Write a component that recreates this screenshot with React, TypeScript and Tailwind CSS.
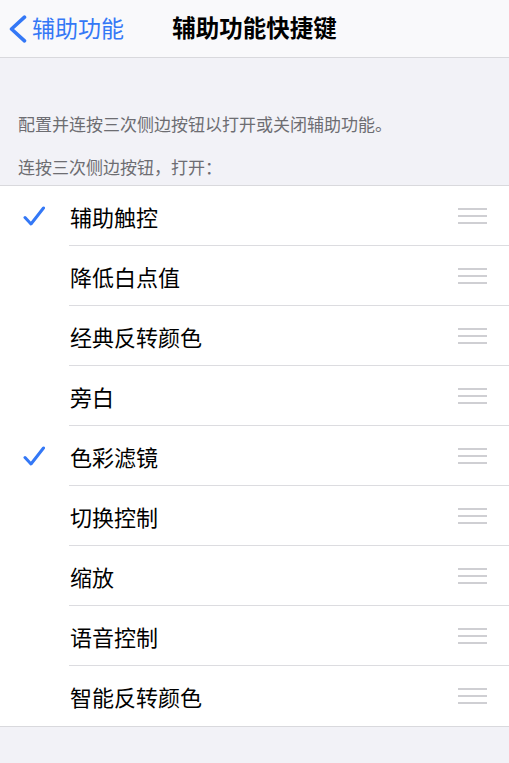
import React from "react";

const font = { fontFamily: '"Noto Sans CJK SC", "Noto Sans", sans-serif' };

interface ShortcutItem {
  label: string;
  checked: boolean;
}

const items: ShortcutItem[] = [
  { label: "辅助触控", checked: true },
  { label: "降低白点值", checked: false },
  { label: "经典反转颜色", checked: false },
  { label: "旁白", checked: false },
  { label: "色彩滤镜", checked: true },
  { label: "切换控制", checked: false },
  { label: "缩放", checked: false },
  { label: "语音控制", checked: false },
  { label: "智能反转颜色", checked: false },
];

function Check() {
  return (
    <svg width="22" height="20" viewBox="0 0 22 20" fill="none">
      <path
        d="M2 11.5 L8 18 L20.5 2"
        stroke="#3478f6"
        strokeWidth="3"
        strokeLinecap="round"
        strokeLinejoin="round"
      />
    </svg>
  );
}

function Grabber() {
  return (
    <div className="flex w-[29px] flex-col gap-[5px]">
      <div className="h-[2px] bg-[#cfcfd3]" />
      <div className="h-[2px] bg-[#cfcfd3]" />
      <div className="h-[2px] bg-[#cfcfd3]" />
    </div>
  );
}

export default function App() {
  return (
    <div className="min-h-[763px] w-[509px] bg-[#f2f2f7]" style={font}>
      {/* nav bar */}
      <div className="relative flex h-[58px] items-center border-b border-[#d9d9dd] bg-[#f9f9fb]">
        <div className="flex items-center pl-[8px] text-[23px] leading-none text-[#3478f6]">
          <svg width="20" height="28" viewBox="0 0 20 28" fill="none" className="mr-[4px]">
            <path
              d="M16.5 2.2 L3.5 14 L16.5 25.8"
              stroke="#3478f6"
              strokeWidth="3.6"
              strokeLinecap="round"
              strokeLinejoin="round"
            />
          </svg>
          <span className="-mt-[2px]">辅助功能</span>
        </div>
        <div className="pointer-events-none absolute inset-x-0 top-0 flex h-[58px] items-center justify-center">
          <span className="-mt-[2px] text-[23.5px] font-semibold leading-none text-black">辅助功能快捷键</span>
        </div>
      </div>

      {/* header notes */}
      <div className="px-[18px] pt-[55px] text-[17px] leading-[22px] text-[#6d6d72]">
        <p>配置并连按三次侧边按钮以打开或关闭辅助功能。</p>
        <p className="mt-[21px]">连按三次侧边按钮，打开：</p>
      </div>

      {/* list */}
      <div className="mt-[7px] border-y border-[#d9d9dd] bg-white">
        {items.map((item, i) => (
          <div key={item.label} className="flex h-[60px] items-stretch">
            <div className="flex w-[69px] shrink-0 items-center pl-[23px]">
              {item.checked && <Check />}
            </div>
            <div
              className={
                "flex flex-1 items-center pr-[22px] " +
                (i < items.length - 1 ? "border-b border-[#dcdce0]" : "")
              }
            >
              <span className="flex-1 pl-px text-[22px] leading-none text-black">{item.label}</span>
              <Grabber />
            </div>
          </div>
        ))}
      </div>
    </div>
  );
}
